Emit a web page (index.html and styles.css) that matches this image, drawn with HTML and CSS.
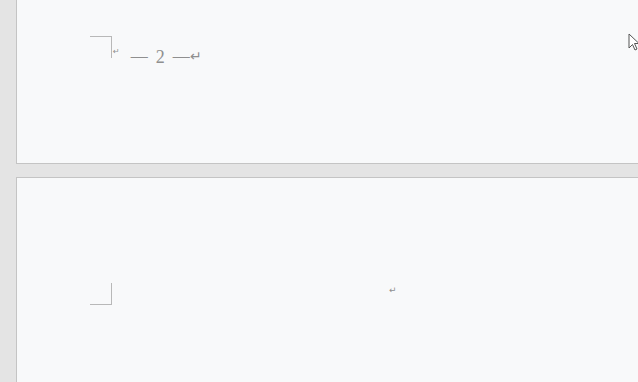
FILE: index.html
```html
<!DOCTYPE html>
<html>
<head>
<meta charset="utf-8">
<link rel="stylesheet" href="styles.css">
</head>
<body>
<div class="desk">
  <div class="page page-one">
    <div class="header-row">
      <div class="corner corner-top"></div>
      <span class="para-mark small">↵</span>
      <span class="page-num"><span class="dash">—</span><span class="num">2</span><span class="dash">—</span><span class="para-mark big">↵</span></span>
    </div>
  </div>
  <div class="page page-two">
    <div class="footer-row">
      <div class="corner corner-bottom"></div>
      <span class="para-mark mid">↵</span>
    </div>
  </div>
</div>
<svg class="cursor" width="12" height="18" viewBox="0 0 12 18"><path d="M1 1 L1 15 L4.5 11.5 L7 17 L9 16 L6.5 10.5 L11 10.5 Z" fill="#fff" stroke="#555" stroke-width="1"/></svg>
</body>
</html>
```
FILE: styles.css
```css
html, body { margin: 0; padding: 0; }
body {
  background: #e4e4e4;
  width: 638px;
  height: 382px;
  overflow: hidden;
  position: relative;
  font-family: "DejaVu Sans", sans-serif;
}
.desk {
  display: flex;
  flex-direction: column;
  gap: 13px;
  padding-left: 16px;
}
.page {
  background: #f8f9fa;
  border-left: 1px solid #c4c4c4;
  box-sizing: border-box;
}
.page-one {
  height: 164px;
  border-bottom: 1px solid #c4c4c4;
  padding: 36px 0 0 73px;
}
.page-two {
  height: 206px;
  border-top: 1px solid #c4c4c4;
  padding: 105px 0 0 73px;
}
.header-row, .footer-row {
  display: flex;
  align-items: flex-start;
}
.corner {
  width: 22px;
  height: 22px;
  box-sizing: border-box;
}
.corner-top {
  border-top: 1px solid #b8b8b8;
  border-right: 1px solid #b8b8b8;
}
.corner-bottom {
  border-bottom: 1px solid #b8b8b8;
  border-right: 1px solid #b8b8b8;
}
.para-mark {
  color: #8f8f8f;
  font-size: 11px;
  line-height: 1;
}
.para-mark.small {
  font-size: 8px;
  margin-top: 12px;
  margin-left: 1px;
}
.para-mark.mid {
  font-size: 9px;
  margin-top: 3px;
  margin-left: 277px;
}
.para-mark.big {
  font-size: 14px;
  margin-left: 0;
  position: relative;
  top: -1px;
}
.page-num {
  margin-left: 11px;
  margin-top: 13px;
  color: #8f8f8f;
  font-family: "Liberation Serif", serif;
  font-size: 17px;
  line-height: 17px;
  white-space: nowrap;
  display: flex;
  align-items: center;
}
.dash {
  display: inline-block;
  width: 17px;
  font-size: 17px;
  position: relative;
  top: -2px;
}
.num {
  display: inline-block;
  margin: 0 8px;
  font-size: 18px;
}
.cursor {
  position: absolute;
  left: 628px;
  top: 33px;
}
```
